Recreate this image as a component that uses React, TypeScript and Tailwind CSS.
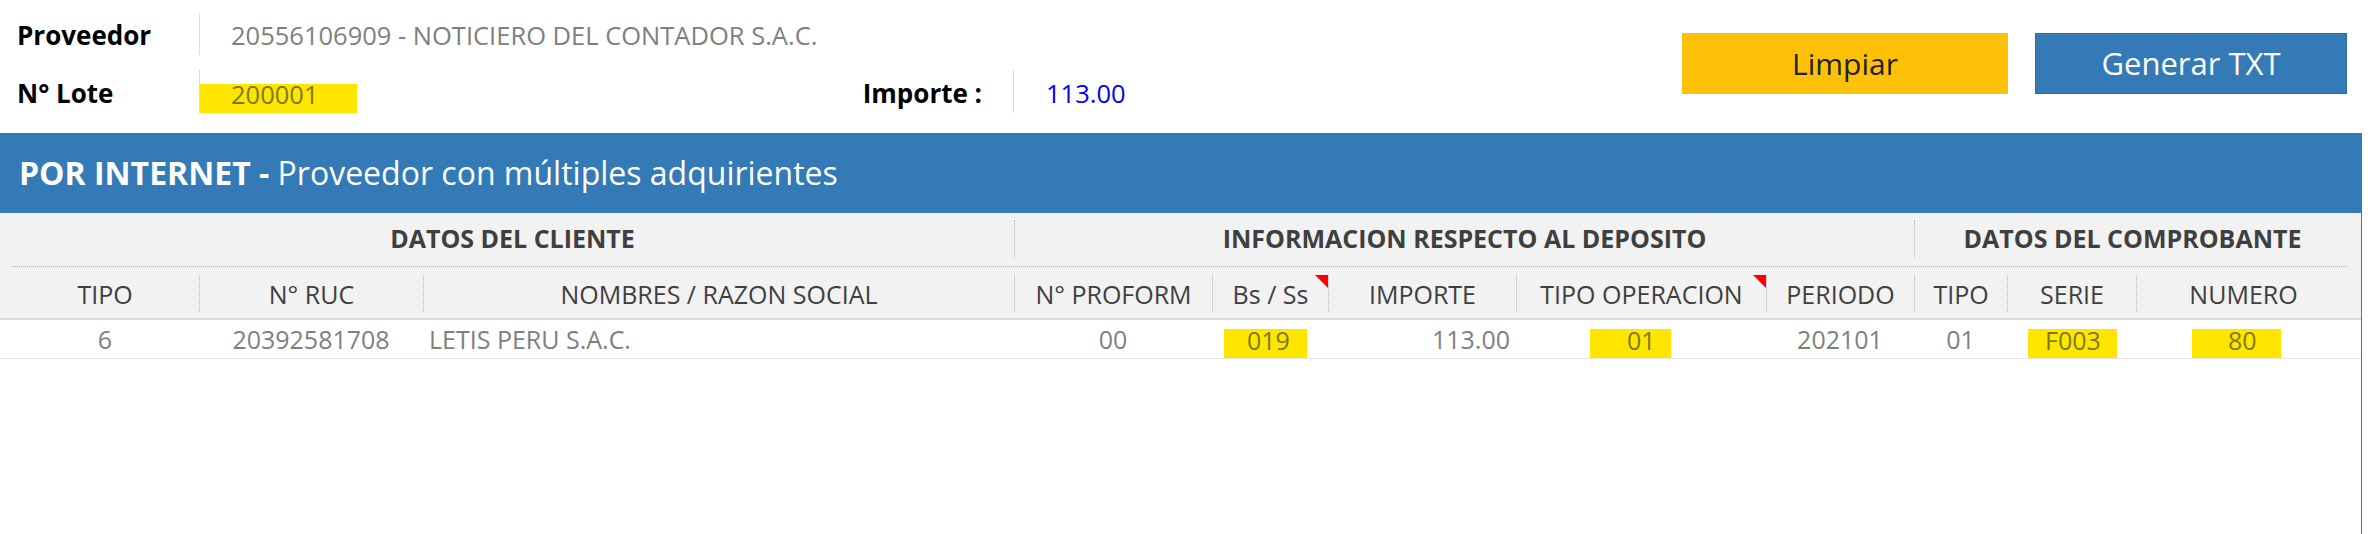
import React from "react";

const Tri = () => (
  <svg className="absolute top-[8px] right-0" width="13" height="13" viewBox="0 0 13 13">
    <polygon points="0,0 13,0 13,13" fill="#ff0000" />
  </svg>
);

type HProps = { w: string; sep?: boolean; children: React.ReactNode; tri?: boolean };

const HeadCell = ({ w, sep = true, children, tri }: HProps) => (
  <div className={`relative flex pt-[8px] pb-[6px] ${w}`}>
    <div
      className={
        sep
          ? "flex-1 flex items-center justify-center border-l border-dotted border-[#b4b4b4] pt-[3px] whitespace-nowrap overflow-hidden"
          : "flex-1 flex items-center justify-center pt-[3px] whitespace-nowrap overflow-hidden"
      }
    >
      {children}
    </div>
    {tri ? <Tri /> : null}
  </div>
);

const GroupCell = ({ w, sep = true, children }: HProps) => (
  <div className={`flex pt-[7px] pb-[8px] ${w}`}>
    <div
      className={
        sep
          ? "flex-1 flex items-center justify-center border-l border-dotted border-[#b4b4b4]"
          : "flex-1 flex items-center justify-center"
      }
    >
      {children}
    </div>
  </div>
);

export default function App() {
  return (
    <div className="w-[2376px] h-[534px] bg-white flex flex-col font-['Open_Sans',sans-serif] overflow-hidden">
      {/* Top section */}
      <div className="h-[133px] flex justify-between shrink-0">
        <div className="flex flex-col pt-[13px] gap-[15px]">
          <div className="flex h-[42px]">
            <div className="w-[199px] pl-[17px] pt-[3px] flex items-center text-[26px] font-bold text-black">
              Proveedor
            </div>
            <div className="border-l border-[#dcdcdc] pl-[31px] pt-[3px] flex items-center text-[25.5px] text-[#7f7f7f] whitespace-nowrap">
              20556106909 - NOTICIERO DEL CONTADOR S.A.C.
            </div>
          </div>
          <div className="flex h-[43px]">
            <div className="w-[199px] pl-[17px] pt-[3px] flex items-center text-[26px] font-bold text-black">
              N° Lote
            </div>
            <div className="w-[814px] border-l border-[#dcdcdc] flex justify-between">
              <div className="self-end h-[29px] w-[157px] bg-[#ffe600] pl-[31px] text-[25.5px] leading-[20px] text-[#7d7a14]">
                200001
              </div>
              <div className="pr-[31px] pt-[3px] flex items-center text-[26px] font-bold text-black whitespace-nowrap">
                Importe :
              </div>
            </div>
            <div className="border-l border-[#dcdcdc] pl-[32px] pt-[3px] flex items-center text-[25.5px] text-[#0000ff]">
              113.00
            </div>
          </div>
        </div>
        <div className="flex gap-[27px] pt-[33px] pr-[29px]">
          <div className="w-[326px] h-[61px] bg-[#ffc107] flex items-center justify-center text-[30px] text-[#222222]">
            Limpiar
          </div>
          <div className="w-[312px] h-[61px] bg-[#337ab7] border border-[#2e6da4] flex items-center justify-center text-[31px] text-white">
            Generar TXT
          </div>
        </div>
      </div>

      {/* Table */}
      <div className="w-[2362px] flex-1 border-r border-[#337ab7] flex flex-col">
        <div className="h-[80px] shrink-0 bg-[#337ab7] flex items-center pl-[19px] text-[32px] text-white whitespace-nowrap">
          <span className="font-bold">POR INTERNET -</span>
          <span>&nbsp;Proveedor con múltiples adquirientes</span>
        </div>

        <div className="bg-[#f2f2f2] shrink-0">
          <div className="flex h-[53px] text-[25px] font-bold text-[#3f3f3f]">
            <div className="w-[11px]" />
            <GroupCell w="w-[1003px]" sep={false}>DATOS DEL CLIENTE</GroupCell>
            <GroupCell w="w-[900px]">INFORMACION RESPECTO AL DEPOSITO</GroupCell>
            <GroupCell w="w-[436px]">DATOS DEL COMPROBANTE</GroupCell>
            <div className="w-[11px]" />
          </div>
          <div className="ml-[11px] mr-[13px] border-t border-dotted border-[#b0b0b0]" />
          <div className="flex h-[53px] border-b-2 border-[#d9d9d9] text-[25px] text-[#3f3f3f]">
            <div className="w-[11px]" />
            <HeadCell w="w-[188px]" sep={false}>TIPO</HeadCell>
            <HeadCell w="w-[224px]">N° RUC</HeadCell>
            <HeadCell w="w-[591px]">NOMBRES / RAZON SOCIAL</HeadCell>
            <HeadCell w="w-[198px]">N° PROFORM</HeadCell>
            <HeadCell w="w-[116px]" tri>Bs / Ss</HeadCell>
            <HeadCell w="w-[188px]">IMPORTE</HeadCell>
            <HeadCell w="w-[250px]" tri>TIPO OPERACION</HeadCell>
            <HeadCell w="w-[148px]">PERIODO</HeadCell>
            <HeadCell w="w-[93px]">TIPO</HeadCell>
            <HeadCell w="w-[129px]">SERIE</HeadCell>
            <HeadCell w="w-[214px]">NUMERO</HeadCell>
            <div className="w-[11px]" />
          </div>
        </div>

        <div className="flex h-[39px] shrink-0 border-b border-[#e6e6e6] bg-white text-[25px] text-[#7f7f7f] whitespace-nowrap">
          <div className="w-[11px]" />
          <div className="w-[188px] flex items-center justify-center pt-[2px]">6</div>
          <div className="w-[224px] flex items-center justify-center pt-[2px]">20392581708</div>
          <div className="w-[591px] flex items-center pl-[6px] pt-[2px]">LETIS PERU S.A.C.</div>
          <div className="w-[198px] flex items-center justify-center pt-[2px]">00</div>
          <div className="w-[116px] flex items-start pt-[9px]">
            <div className="ml-[12px] w-[83px] h-[29px] bg-[#ffe600] pl-[23px] leading-[22px] text-[#7d7a14]">019</div>
          </div>
          <div className="w-[188px] flex items-center justify-end pr-[6px] pt-[2px]">113.00</div>
          <div className="w-[250px] flex items-start pt-[9px]">
            <div className="ml-[74px] w-[81px] h-[29px] bg-[#ffe600] pl-[37px] leading-[22px] text-[#7d7a14]">01</div>
          </div>
          <div className="w-[148px] flex items-center justify-center pt-[2px]">202101</div>
          <div className="w-[93px] flex items-center justify-center pt-[2px]">01</div>
          <div className="w-[129px] flex items-start pt-[9px]">
            <div className="ml-[21px] w-[89px] h-[29px] bg-[#ffe600] pl-[17px] leading-[22px] text-[#7d7a14]">F003</div>
          </div>
          <div className="w-[214px] flex items-start pt-[9px]">
            <div className="ml-[56px] w-[89px] h-[29px] bg-[#ffe600] pl-[36px] leading-[22px] text-[#7d7a14]">80</div>
          </div>
          <div className="w-[11px]" />
        </div>
        <div className="flex-1 bg-white" />
      </div>
    </div>
  );
}
